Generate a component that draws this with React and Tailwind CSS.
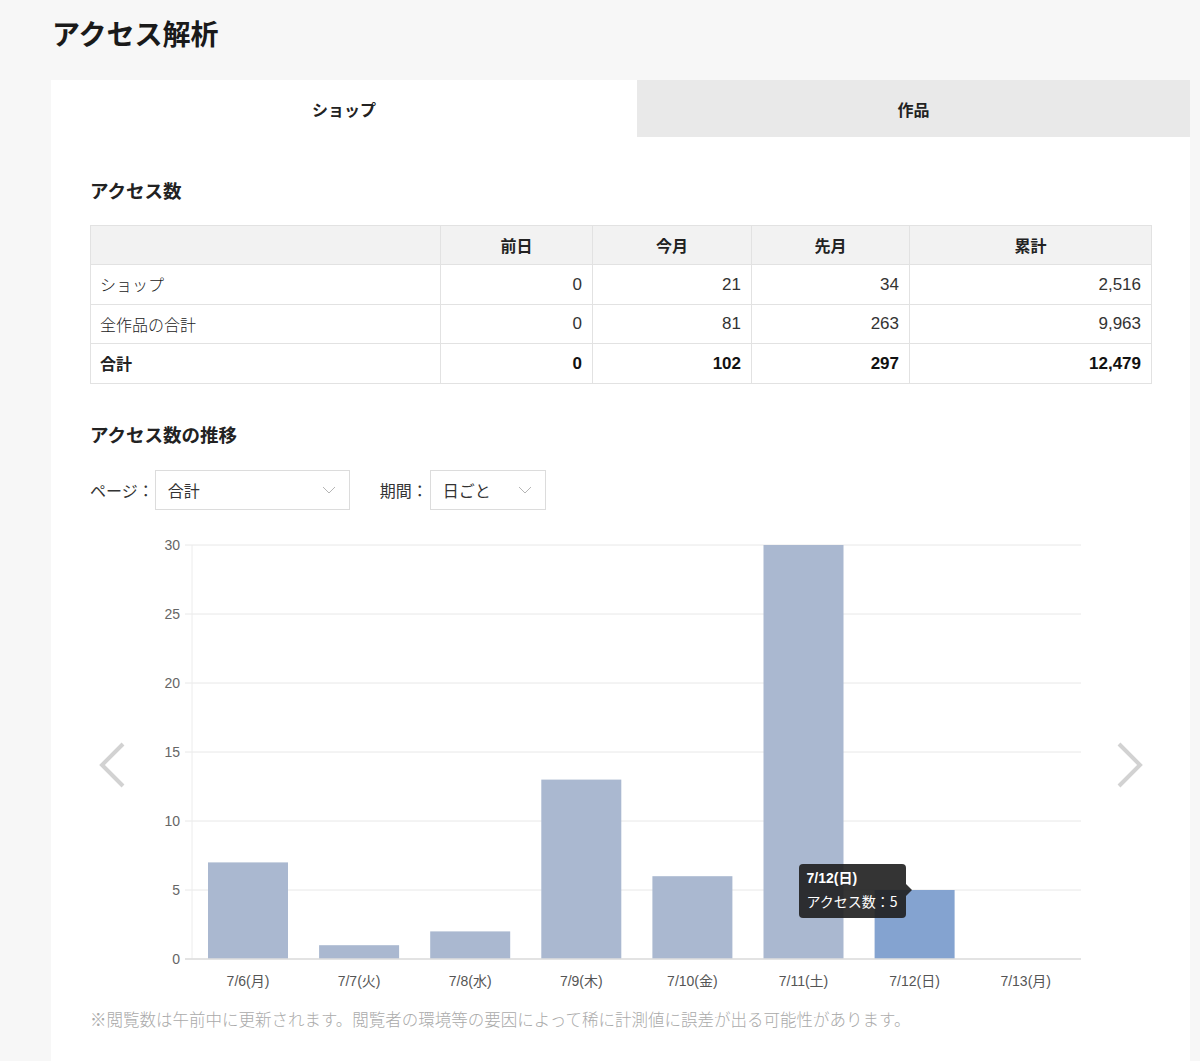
import React from "react"

const font = { fontFamily: '"Noto Sans CJK JP", "Noto Sans", sans-serif' }

const rows = [
  { name: "ショップ", v: ["0", "21", "34", "2,516"] },
  { name: "全作品の合計", v: ["0", "81", "263", "9,963"] },
  { name: "合計", v: ["0", "102", "297", "12,479"], bold: true },
]

const days = [
  { label: "7/6(月)", v: 7 },
  { label: "7/7(火)", v: 1 },
  { label: "7/8(水)", v: 2 },
  { label: "7/9(木)", v: 13 },
  { label: "7/10(金)", v: 6 },
  { label: "7/11(土)", v: 30 },
  { label: "7/12(日)", v: 5, active: true },
  { label: "7/13(月)", v: 0 },
]

const Chevron = ({ className = "" }) => (
  <svg width="14" height="8" viewBox="0 0 14 8" className={className}>
    <path d="M1 1l6 6 6-6" fill="none" stroke="#b5b5b5" strokeWidth="1" />
  </svg>
)

const Select = ({ value, width }) => (
  <div className={`flex items-center justify-between h-[40px] border border-[#dcdcdc] bg-white pl-[12px] pr-[13px] ${width}`}>
    <span className="text-[16px] text-[#333]">{value}</span>
    <Chevron />
  </div>
)

const Chart = () => {
  const grid = [0, 5, 10, 15, 20, 25, 30]
  const y0 = 429
  const unit = 13.8
  const step = 111.1
  return (
    <div className="relative w-[980px] h-[470px]">
      <svg width="980" height="470" style={{ fontFamily: '"Liberation Sans", "Noto Sans CJK JP", sans-serif' }}>
        {grid.map((g) => (
          <g key={g}>
            <line x1="55" x2="951" y1={y0 - g * unit} y2={y0 - g * unit} stroke="#e8e8e8" strokeWidth="1" />
            <text x="50" y={y0 - g * unit + 5} textAnchor="end" fontSize="14" fill="#666">{g}</text>
          </g>
        ))}
        <line x1="62" x2="62" y1="15" y2={y0} stroke="#ececec" strokeWidth="1" />
        {days.map((d, i) => (
          <g key={d.label}>
            {d.v > 0 && (
              <rect x={78 + i * step} y={y0 - d.v * unit} width="80" height={d.v * unit} fill={d.active ? "#84a3d0" : "#aab8d0"} />
            )}
            <text x={118 + i * step} y="456" textAnchor="middle" fontSize="14" fill="#555">{d.label}</text>
          </g>
        ))}
        <line x1="55" x2="951" y1={y0} y2={y0} stroke="#dedede" strokeWidth="1.5" />
      </svg>
      <div className="absolute left-[669px] top-[334px] w-[107px] h-[54px] rounded-[4px] bg-[#1e1e1e]/90 text-white px-[8px] pt-[5px]">
        <div className="text-[14px] font-bold leading-[18px]" style={{ fontFamily: '"Liberation Sans", "Noto Sans CJK JP", sans-serif' }}>7/12(日)</div>
        <div className="text-[14px] leading-[18px] mt-[5px] whitespace-nowrap">アクセス数：5</div>
        <div className="absolute right-[-6px] top-[20px] w-0 h-0 border-y-[6px] border-y-transparent border-l-[6px] border-l-[#1e1e1e]/90" />
      </div>
    </div>
  )
}

const Arrow = ({ dir }) => (
  <svg width="30" height="48" viewBox="0 0 30 48">
    <path d={dir === "left" ? "M26 3L5 24l21 21" : "M4 3l21 21L4 45"} fill="none" stroke="#d2d2d2" strokeWidth="4" />
  </svg>
)

export default function App() {
  return (
    <div className="min-h-[1061px] bg-[#f7f7f7] text-[#222]" style={font}>
      <div className="pl-[52px] pt-[14px] h-[80px]">
        <h1 className="text-[28px] font-bold leading-[38px] text-[#1a1a1a]">アクセス解析</h1>
      </div>
      <div className="ml-[51px] w-[1139px] bg-white min-h-[981px]">
        <div className="flex h-[57px]">
          <div className="w-[586px] flex items-center justify-center text-[16px] font-bold">ショップ</div>
          <div className="flex-1 flex items-center justify-center text-[16px] font-bold bg-[#e9e9e9]">作品</div>
        </div>
        <div className="px-[39px] pt-[40px]">
          <h2 className="text-[18.5px] font-bold leading-[26px]">アクセス数</h2>
          <table className="mt-[22px] w-[1062px] border-collapse text-[17px]">
            <thead>
              <tr className="bg-[#f2f2f2] h-[39px]">
                <th className="border border-[#e2e2e2] w-[350px] p-0"></th>
                <th className="border border-[#e2e2e2] w-[152px] font-bold text-[16px] p-0">前日</th>
                <th className="border border-[#e2e2e2] w-[159px] font-bold text-[16px] p-0">今月</th>
                <th className="border border-[#e2e2e2] w-[158px] font-bold text-[16px] p-0">先月</th>
                <th className="border border-[#e2e2e2] font-bold text-[16px] p-0">累計</th>
              </tr>
            </thead>
            <tbody>
              {rows.map((r) => (
                <tr key={r.name} className="h-[39.6px]">
                  <td className={`border border-[#e2e2e2] px-[9px] py-0 text-[16px] ${r.bold ? "font-bold" : "font-light"}`}>{r.name}</td>
                  {r.v.map((v, i) => (
                    <td
                      key={i}
                      className={`border border-[#e2e2e2] px-[10px] py-0 text-right ${r.bold ? "font-bold text-[#111]" : "text-[#333]"}`}
                      style={{ fontFamily: '"Liberation Sans", sans-serif', fontWeight: r.bold ? 700 : 300 }}
                    >
                      {v}
                    </td>
                  ))}
                </tr>
              ))}
            </tbody>
          </table>

          <h2 className="mt-[37px] text-[18.5px] font-bold leading-[26px]">アクセス数の推移</h2>
          <div className="mt-[23px] flex items-center">
            <span className="text-[16px] text-[#333] mr-[1px]">ページ：</span>
            <Select value="合計" width="w-[195px]" />
            <span className="text-[16px] text-[#333] ml-[30px] mr-[2px]">期間：</span>
            <Select value="日ごと" width="w-[116px]" />
          </div>

          <div className="mt-[20px] flex items-center">
            <div className="w-[40px] flex justify-center pl-[4px]">
              <Arrow dir="left" />
            </div>
            <Chart />
            <div className="w-[42px] flex justify-center">
              <Arrow dir="right" />
            </div>
          </div>

          <p className="mt-[8px] text-[16.5px] leading-[22px] text-[#aaa] font-light whitespace-nowrap">
            ※閲覧数は午前中に更新されます。閲覧者の環境等の要因によって稀に計測値に誤差が出る可能性があります。
          </p>
        </div>
      </div>
    </div>
  )
}
